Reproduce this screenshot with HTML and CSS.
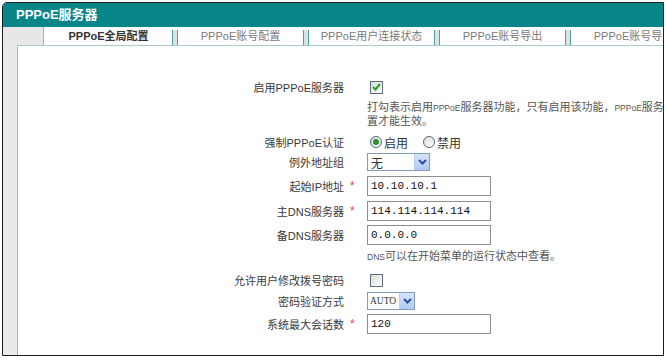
FILE: index.html
```html
<!DOCTYPE html>
<html lang="zh-CN">
<head>
	<meta charset="UTF-8">
	<title>PPPoE服务器</title>
	<link rel="stylesheet" href="styles.css">
</head>
<body>
<div class="frame">
	<div class="titlebar">PPPoE服务器</div>

	<div class="tabbar">
		<div class="tab-corner"></div>
		<div class="tab active">PPPoE全局配置</div>
		<div class="tab-sep"></div>
		<div class="tab">PPPoE账号配置</div>
		<div class="tab-sep"></div>
		<div class="tab">PPPoE用户连接状态</div>
		<div class="tab-sep"></div>
		<div class="tab">PPPoE账号导出</div>
		<div class="tab-sep"></div>
		<div class="tab">PPPoE账号导入</div>
	</div>

	<div class="body">
		<div class="side"></div>
		<div class="content">

			<div class="row h24">
				<div class="label">启用PPPoE服务器</div>
				<div class="star"></div>
				<div class="field"><span class="check on"><svg width="9" height="8" viewBox="0 0 9 8"><path d="M1 4 L3.5 6.5 L8 1" fill="none" stroke="#21a121" stroke-width="2"/></svg></span></div>
			</div>
			<div class="help two">
				<div>打勾表示启用<small>PPPoE</small>服务器功能，只有启用该功能，<small>PPPoE</small>服务器的配</div>
				<div>置才能生效。</div>
			</div>

			<div class="row h20 gap6">
				<div class="label">强制PPPoE认证</div>
				<div class="star"></div>
				<div class="field">
					<span class="radio on"></span><span class="opt">启用</span>
					<span class="radio"></span><span class="opt">禁用</span>
				</div>
			</div>

			<div class="row h20">
				<div class="label">例外地址组</div>
				<div class="star"></div>
				<div class="field">
					<div class="select wide"><span class="sel-text">无</span><span class="sel-btn"><svg width="9" height="6" viewBox="0 0 9 6"><path d="M1 1 L4.5 4.5 L8 1" fill="none" stroke="#2b4f9e" stroke-width="2"/></svg></span></div>
				</div>
			</div>

			<div class="row h24 gap2">
				<div class="label">起始IP地址</div>
				<div class="star">*</div>
				<div class="field"><div class="input">10.10.10.1</div></div>
			</div>

			<div class="row h24 gap1">
				<div class="label">主DNS服务器</div>
				<div class="star">*</div>
				<div class="field"><div class="input">114.114.114.114</div></div>
			</div>

			<div class="row h24">
				<div class="label">备DNS服务器</div>
				<div class="star"></div>
				<div class="field"><div class="input">0.0.0.0</div></div>
			</div>

			<div class="help one"><small>DNS</small>可以在开始菜单的运行状态中查看。</div>

			<div class="row h24 gap4">
				<div class="label">允许用户修改拨号密码</div>
				<div class="star"></div>
				<div class="field"><span class="check"></span></div>
			</div>

			<div class="row h18">
				<div class="label">密码验证方式</div>
				<div class="star"></div>
				<div class="field">
					<div class="select narrow"><span class="sel-text mono">AUTO</span><span class="sel-btn"><svg width="9" height="6" viewBox="0 0 9 6"><path d="M1 1 L4.5 4.5 L8 1" fill="none" stroke="#2b4f9e" stroke-width="2"/></svg></span></div>
				</div>
			</div>

			<div class="row h24 gap2">
				<div class="label">系统最大会话数</div>
				<div class="star">*</div>
				<div class="field"><div class="input">120</div></div>
			</div>

		</div>
	</div>
</div>
</body>
</html>
```

FILE: styles.css
```css
body {
	margin: 0;
	background: #fff;
	font-family: "Liberation Sans", "Noto Sans CJK SC", sans-serif;
	font-size: 11px;
	color: #333;
}

.frame {
	margin: 2px 0 0 2px;
	width: 660px;
	height: 352px;
	border: 1px solid #1e1e1e;
	border-top-left-radius: 5px;
	overflow: hidden;
	display: flex;
	flex-direction: column;
}

.titlebar {
	height: 24px;
	line-height: 23px;
	padding-left: 13px;
	background: #078589;
	color: #fff;
	font-weight: bold;
	font-size: 13px;
	flex: none;
}

.tabbar {
	height: 19px;
	display: flex;
	align-items: flex-end;
	flex: none;
	white-space: nowrap;
	background: #fff;
	position: relative;
}

.tabbar::after {
	content: "";
	position: absolute;
	left: 14px;
	right: 0;
	bottom: 0;
	border-bottom: 1px solid #a9cbcc;
}

.tab-corner {
	width: 41px;
	height: 19px;
	background: #e7e7e7;
	border-right: 1px solid #8fc0c1;
	box-sizing: border-box;
	flex: none;
	margin-right: 1px;
}

.tab {
	width: 125px;
	flex: none;
	text-align: center;
	line-height: 18px;
	height: 19px;
	color: #7a7a7a;
	font-size: 11px;
}

.tab.active {
	width: 127px;
	color: #333;
	font-weight: bold;
}

.tab-sep {
	width: 6px;
	height: 16px;
	box-sizing: border-box;
	border-left: 1px solid #4f9fa1;
	border-right: 1px solid #4f9fa1;
	background: #dde3e3;
	flex: none;
}

.body {
	flex: 1;
	display: flex;
}

.side {
	width: 14px;
	background: #e9e9e9;
	border-right: 1px solid #8fc0c1;
	flex: none;
}

.content {
	flex: 1;
	padding-top: 29px;
}

.row {
	display: grid;
	grid-template-columns: 326px 23px 1fr;
	align-items: center;
}

.h24 { height: 24px; }
.h20 { height: 20px; }
.h18 { height: 18px; }
.gap1 { margin-top: 1px; }
.gap2 { margin-top: 2px; }
.gap4 { margin-top: 4px; }
.gap6 { margin-top: 6px; }

.label {
	text-align: right;
	color: #3a3a3a;
}

.star {
	color: #e84a4a;
	padding-left: 6px;
	font-size: 12px;
}

.field {
	display: flex;
	align-items: center;
}

.help {
	margin-left: 349px;
	color: #555;
	white-space: nowrap;
	line-height: 13px;
}

.help.two { height: 27px; padding-top: 2px; box-sizing: border-box; }
.help.one { height: 16px; line-height: 16px; margin-top: 1px; }

.help small {
	font-size: 8.5px;
}

.check {
	width: 13px;
	height: 13px;
	box-sizing: border-box;
	border: 1px solid #5a6f86;
	background: linear-gradient(135deg, #dcdcd6, #fdfdfd);
	margin-left: 3px;
	display: flex;
	align-items: center;
	justify-content: center;
}

.radio {
	width: 12px;
	height: 12px;
	box-sizing: border-box;
	border: 1px solid #4e6880;
	border-radius: 50%;
	background: linear-gradient(135deg, #dcdcd6, #fff);
	margin-left: 3px;
	display: inline-flex;
	align-items: center;
	justify-content: center;
}

.radio.on::after {
	content: "";
	width: 6px;
	height: 6px;
	border-radius: 50%;
	background: #2e8f2e;
}

.opt {
	margin-left: 2px;
	margin-right: 12px;
	font-size: 12px;
}

.select {
	height: 18px;
	box-sizing: border-box;
	border: 1px solid #7f9db9;
	background: #fff;
	display: flex;
	align-items: center;
	justify-content: space-between;
}

.select.wide { width: 63px; }
.select.narrow { width: 48px; }

.sel-text {
	padding-left: 3px;
	font-size: 12px;
}

.sel-text.mono {
	font-family: "Liberation Serif", serif;
	font-size: 9.5px;
	padding-left: 2px;
}

.sel-btn {
	width: 15px;
	height: 16px;
	background: linear-gradient(#d6e3fd, #b1c8f5);
	border-left: 1px solid #b9cdf5;
	box-sizing: border-box;
	display: flex;
	align-items: center;
	justify-content: center;
}

.input {
	width: 124px;
	height: 20px;
	box-sizing: border-box;
	border: 1px solid #8e8e8e;
	padding-left: 3px;
	line-height: 18px;
	font-family: "Liberation Mono", monospace;
	font-size: 11px;
	color: #111;
}
```
